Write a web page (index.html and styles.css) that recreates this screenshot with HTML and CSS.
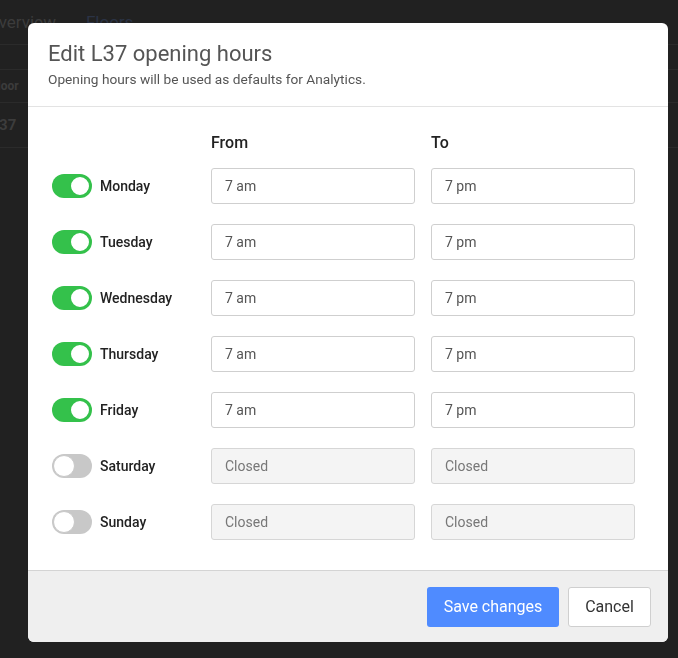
FILE: index.html
```html
<!DOCTYPE html>
<html lang="en">
  <head>
    <meta charset="UTF-8" />
    <meta name="viewport" content="width=device-width, initial-scale=1.0" />
    <title>Edit L37 opening hours</title>
    <link rel="stylesheet" href="styles.css">
  </head>
  <body>
    <div class="page">
      <div class="tabs">
        <span class="tab">Overview</span>
        <span class="tab">Floors</span>
      </div>
      <div class="table-row spacer"></div>
      <div class="table-row head">Floor</div>
      <div class="table-row cell">L37</div>
    </div>

    <div class="overlay">
      <div class="modal">
        <div class="modal-header">
          <h2>Edit L37 opening hours</h2>
          <p>Opening hours will be used as defaults for Analytics.</p>
        </div>
        <div class="modal-body">
          <div class="hours-grid" id="hours-grid">
            <div></div>
            <div class="col-title">From</div>
            <div class="col-title">To</div>
          </div>
        </div>
        <div class="modal-footer">
          <button type="button" class="btn btn-primary">Save changes</button>
          <button type="button" class="btn btn-default">Cancel</button>
        </div>
      </div>
    </div>

    <script>
      var days = [
        { name: "Monday", open: true },
        { name: "Tuesday", open: true },
        { name: "Wednesday", open: true },
        { name: "Thursday", open: true },
        { name: "Friday", open: true },
        { name: "Saturday", open: false },
        { name: "Sunday", open: false },
      ];

      function renderDays() {
        let grid = document.getElementById("hours-grid");
        days.forEach((day) => {
          let dayCell = document.createElement("label");
          dayCell.className = "day";
          dayCell.innerHTML = `<span class="switch ${day.open ? "on" : ""}"><span class="knob"></span></span>
            <span class="day-name">${day.name}</span>`;
          grid.appendChild(dayCell);

          let from = document.createElement("input");
          let to = document.createElement("input");
          from.type = to.type = "text";
          from.className = to.className = "time";
          if (day.open) {
            from.value = "7 am";
            to.value = "7 pm";
          } else {
            from.value = to.value = "Closed";
            from.disabled = to.disabled = true;
          }
          grid.appendChild(from);
          grid.appendChild(to);
        });
      }

      renderDays();
    </script>
  </body>
</html>
```

FILE: styles.css
```css
body {
  margin: 0;
  font-family: Roboto, "Liberation Sans", sans-serif;
  background-color: #212121;
  color: #3c3c3c;
}
.page {
  height: 658px;
  overflow: hidden;
}
.tabs {
  display: flex;
  gap: 30px;
  height: 44px;
  margin-left: -13px;
  border-bottom: 1px solid #2b2b2b;
  font-size: 17px;
  line-height: 44px;
}
.tab:last-child {
  color: #2b3345;
}
.table-row {
  border-bottom: 1px solid #2b2b2b;
  margin-left: -9px;
}
.spacer {
  height: 24px;
}
.head {
  height: 32px;
  line-height: 32px;
  font-size: 12px;
  font-weight: 700;
}
.cell {
  height: 44px;
  line-height: 44px;
  font-size: 15px;
  font-weight: 700;
}

.overlay {
  position: fixed;
  inset: 0;
  padding: 23px 0 0 28px;
}
.modal {
  width: 640px;
  background-color: #fff;
  border-radius: 6px;
  overflow: hidden;
  color: #222;
}
.modal-header {
  padding: 16px 20px 17px;
  border-bottom: 1px solid #e3e3e3;
}
.modal-header h2 {
  margin: 0;
  font-size: 22px;
  line-height: 30px;
  font-weight: 400;
  color: #555;
}
.modal-header p {
  margin: 0;
  font-size: 13.7px;
  line-height: 20px;
  color: #555;
}
.modal-body {
  padding: 24px 24px 30px;
}
.hours-grid {
  display: grid;
  grid-template-columns: 143px 204px 204px;
  column-gap: 16px;
  row-gap: 20px;
  align-items: center;
}
.col-title {
  font-size: 16px;
  font-weight: 500;
  line-height: 22px;
  margin-top: 1px;
  margin-bottom: -6px;
}
.day {
  display: flex;
  align-items: center;
  gap: 8px;
}
.day-name {
  font-size: 14px;
  font-weight: 500;
  color: #222;
}
.switch {
  width: 40px;
  height: 24px;
  border-radius: 12px;
  background-color: #c8c8c8;
  display: flex;
  align-items: center;
  padding: 0 1px;
  box-sizing: border-box;
}
.switch .knob {
  width: 22px;
  height: 22px;
  border-radius: 50%;
  background-color: #fff;
  box-sizing: border-box;
  border: 1px solid #c8c8c8;
}
.switch.on {
  background-color: #34c14b;
  justify-content: flex-end;
}
.switch.on .knob {
  border: 2px solid #34c14b;
}
.time {
  width: 100%;
  height: 36px;
  box-sizing: border-box;
  padding: 0 13px;
  border: 1px solid #cfcfcf;
  border-radius: 3px;
  font-family: inherit;
  font-size: 14px;
  color: #555;
  background-color: #fff;
}
.time:disabled {
  background-color: #f4f4f4;
  color: #777;
  border-color: #d6d6d6;
}
.modal-footer {
  display: flex;
  justify-content: flex-end;
  align-items: center;
  gap: 9px;
  height: 71px;
  padding-right: 17px;
  background-color: #efefef;
  border-top: 1px solid #d4d4d4;
}
.btn {
  height: 40px;
  padding: 0 16px;
  font-family: inherit;
  font-size: 16px;
  border-radius: 3px;
  cursor: pointer;
}
.btn-primary {
  width: 132px;
  background-color: #4f8bff;
  border: none;
  color: #fff;
}
.btn-default {
  width: 83px;
  background-color: #fff;
  border: 1px solid #cfcfcf;
  color: #333;
}
```
